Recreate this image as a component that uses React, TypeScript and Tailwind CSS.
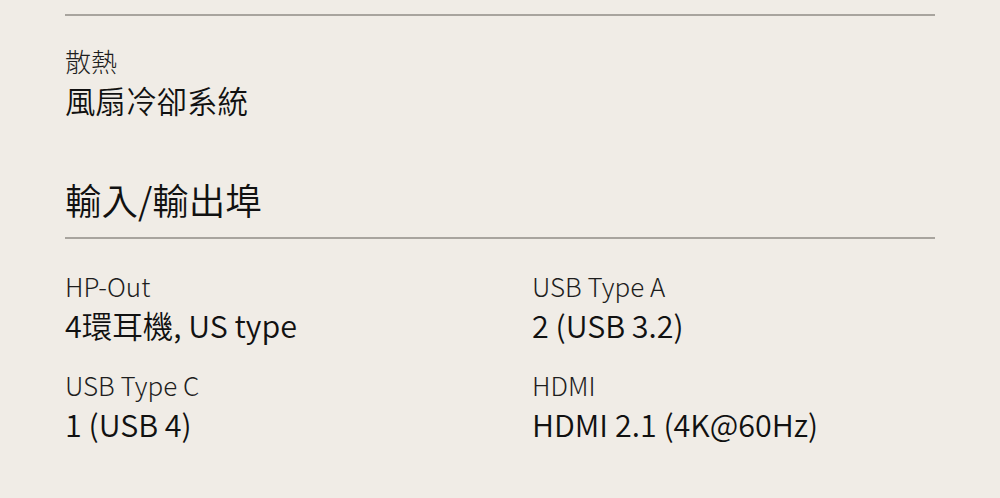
const font = { fontFamily: '"Noto Sans CJK TC", "Noto Sans", sans-serif' };

function Spec({ label, value }: { label: string; value: string }) {
  return (
    <div>
      <div className="text-[26px] font-light leading-[36px] text-[#1e1e1e]">{label}</div>
      <div className="mt-[1px] text-[30.5px] font-[350] leading-[40px] text-[#111]">{value}</div>
    </div>
  );
}

export default function App() {
  return (
    <div className="h-[498px] w-[1000px] overflow-hidden bg-[#f0ece6] px-[65px] pt-[14px]" style={font}>
      <div className="border-t-[2px] border-[#a8a49e] pt-[27px]">
        <Spec label="散熱" value="風扇冷卻系統" />
      </div>

      <h2 className="mt-[57px] border-b-[2px] border-[#a8a49e] pb-[14px] text-[36.5px] font-[350] leading-[46px] text-[#111]">
        輸入/輸出埠
      </h2>

      <div className="grid grid-cols-2 gap-x-[64px] gap-y-[22px] pt-[29px]">
        <Spec label="HP-Out" value="4環耳機, US type" />
        <Spec label="USB Type A" value="2 (USB 3.2)" />
        <Spec label="USB Type C" value="1 (USB 4)" />
        <Spec label="HDMI" value="HDMI 2.1 (4K@60Hz)" />
      </div>
    </div>
  );
}
